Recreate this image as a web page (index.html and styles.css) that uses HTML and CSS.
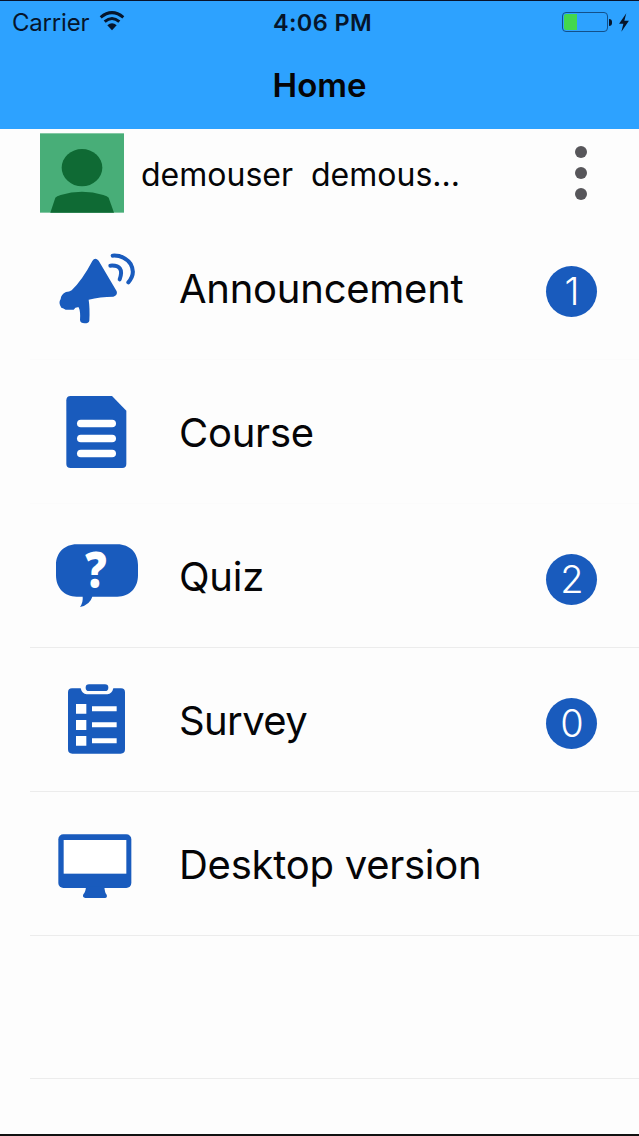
FILE: index.html
```html
<!DOCTYPE html>
<html lang="en">
<head>
    <meta charset="UTF-8">
    <meta name="viewport" content="width=device-width, initial-scale=1.0">
    <title>Home</title>
    <link rel="stylesheet" href="styles.css">
</head>
<body>
    <div class="phone">
        <header class="header">
            <div class="status-bar">
                <div class="status-left">
                    <span class="carrier">Carrier</span>
                    <svg class="wifi" viewBox="0 0 78 60">
                        <path d="M5 19 Q39 -9 73 19" fill="none" stroke="#06152b" stroke-width="9"/>
                        <path d="M17 32 Q39 13 61 32" fill="none" stroke="#06152b" stroke-width="9"/>
                        <path d="M25 43 Q39 31 53 43 L39 58 Z" fill="#06152b"/>
                    </svg>
                </div>
                <span class="time">4:06 PM</span>
                <div class="status-right">
                    <div class="battery"><div class="battery-level"></div></div>
                    <div class="battery-cap"></div>
                    <svg class="bolt" viewBox="0 0 36 58">
                        <path d="M25 1 L3 33 H16 L10 57 L33 24 H19 Z" fill="#06152b"/>
                    </svg>
                </div>
            </div>
            <h1>Home</h1>
        </header>

        <div class="user-row">
            <svg class="avatar" viewBox="0 0 252 238">
                <rect width="252" height="238" fill="#48ae78"/>
                <ellipse cx="126" cy="103" rx="61" ry="56" fill="#0f6a34"/>
                <path d="M31 238 L46 193 Q50 189 62 185 Q126 165 190 185 Q202 189 206 193 L222 238 Z" fill="#0f6a34"/>
            </svg>
            <span class="user-name">demouser&nbsp; demous...</span>
            <div class="more">
                <i></i><i></i><i></i>
            </div>
        </div>

        <ul class="menu">
            <li class="faint">
                <svg class="icon" viewBox="0 -72 390 432">
                    <path d="M187 63 Q195 50 206 62 L260 154 Q264 166 250 170 Q210 170 176 179 Q180 205 178 242 Q176 250 164 250 Q151 250 150 240 Q152 215 146 202 Q137 200 131 209 H107 Q100 204 94 203 Q84 188 92 177 Q93 163 108 156 Q118 156 125 151 Q157 120 187 63 Z"/>
                    <path class="line" d="M241 77 Q285 74 269 118"/>
                    <path class="line" d="M248 47 Q282 45 302 72 Q318 101 295 127"/>
                </svg>
                <span class="label">Announcement</span>
                <span class="badge">1</span>
            </li>
            <li class="faint">
                <svg class="icon" viewBox="0 -60 390 432">
                    <path d="M122 48 H246 L289 92 V252 Q289 264 277 264 H122 Q109 264 109 252 V61 Q109 48 122 48 Z"/>
                    <rect class="white" x="141" y="119" width="117" height="23" rx="11.5"/>
                    <rect class="white" x="141" y="164" width="117" height="23" rx="11.5"/>
                    <rect class="white" x="141" y="209" width="117" height="23" rx="11.5"/>
                </svg>
                <span class="label">Course</span>
            </li>
            <li>
                <svg class="icon" viewBox="0 -78 390 432">
                    <path d="M140 43 H262 C300 43 324 69 324 105 V136 C324 174 299 200 262 200 H187 Q180 224 150 231 Q160 216 158 200 H140 C103 200 78 174 78 136 V105 C78 69 103 43 140 43 Z"/>
                    <text class="question" transform="translate(198 174) scale(0.85 1)">?</text>
                </svg>
                <span class="label">Quiz</span>
                <span class="badge">2</span>
            </li>
            <li>
                <svg class="icon" viewBox="0 -66 390 432">
                    <path d="M126 55 H152 Q156 72 170 73 H232 Q246 72 250 55 H273 Q285 55 285 67 V238 Q285 251 272 251 H127 Q114 251 114 238 V67 Q114 55 126 55 Z"/>
                    <rect x="167" y="43" width="68" height="20" rx="10"/>
                    <path class="white" d="M138 102 h31 v29 h-31 Z M138 150 h31 v30 h-31 Z M138 198 h31 v29 h-31 Z M186 109 h74 v15 h-74 Z M186 157 h74 v15 h-74 Z M186 205 h74 v15 h-74 Z"/>
                </svg>
                <span class="label wide">Survey</span>
                <span class="badge">0</span>
            </li>
            <li>
                <svg class="icon" viewBox="0 -84 390 432">
                    <rect x="85" y="43" width="219" height="161" rx="15"/>
                    <rect class="white" x="101" y="60" width="188" height="101"/>
                    <path d="M168 200 H223 Q224 217 230 224 Q233 233 225 234 H166 Q156 233 160 223 Q167 216 168 200 Z"/>
                </svg>
                <span class="label">Desktop version</span>
            </li>
            <li class="empty"></li>
        </ul>
    </div>
</body>
</html>
```

FILE: styles.css
```css
* {
    box-sizing: border-box;
}
body {
    margin: 0;
    background-color: #fdfdfd;
    font-family: Inter, "Liberation Sans", sans-serif;
    color: #050507;
}
.phone {
    width: 639px;
    height: 1136px;
    overflow: hidden;
    border-top: 1px solid #08132b;
    border-bottom: 2px solid #111;
}
.header {
    height: 128px;
    background-color: #2da2ff;
}
.status-bar {
    height: 42px;
    display: grid;
    grid-template-columns: 1fr auto 1fr;
    align-items: center;
    padding: 0 9px 0 12px;
    font-size: 24px;
    color: #06152b;
}
.status-left, .status-right {
    display: flex;
    align-items: center;
}
.status-right {
    justify-content: flex-end;
}
.carrier {
    letter-spacing: -0.2px;
}
.wifi {
    width: 26px;
    height: 20px;
    margin-left: 10px;
    margin-top: -2px;
}
.time {
    margin-left: 3px;
    font-size: 23.5px;
    font-weight: 600;
    letter-spacing: 0.4px;
}
.battery {
    width: 46px;
    height: 20px;
    padding: 1px;
    border: 1px solid #13508a;
    border-radius: 4px;
}
.battery-level {
    width: 13px;
    height: 100%;
    background-color: #43d74e;
    border-radius: 2px 0 0 2px;
}
.battery-cap {
    width: 3px;
    height: 7px;
    margin-left: 1px;
    background-color: #06152b;
    border-radius: 0 3px 3px 0;
}
.bolt {
    width: 12px;
    height: 19px;
    margin-left: 6px;
}
h1 {
    margin: 22px 0 0;
    text-align: center;
    font-size: 33px;
    line-height: 40px;
    font-weight: 600;
}
.user-row {
    height: 87px;
    display: flex;
    align-items: flex-start;
    padding: 4px 52px 0 40px;
}
.avatar {
    width: 84px;
    height: 80px;
}
.user-name {
    margin-left: 17px;
    font-size: 32px;
    line-height: 83px;
}
.more {
    margin: 13px 0 0 auto;
    display: flex;
    flex-direction: column;
    gap: 9px;
}
.more i {
    width: 12px;
    height: 12px;
    border-radius: 50%;
    background-color: #57565a;
}
.menu {
    list-style: none;
    margin: 0 0 0 30px;
    padding: 0;
}
.menu li {
    height: 144px;
    display: flex;
    align-items: center;
    padding-right: 42px;
    border-bottom: 1px solid #ececec;
}
.menu .faint {
    border-bottom-color: #fbfbfb;
}
.menu .empty {
    height: 143px;
}
.icon {
    width: 130px;
    height: 144px;
    flex: none;
    fill: #195bbd;
}
.icon .white {
    fill: #fff;
}
.icon .line {
    fill: none;
    stroke: #195bbd;
    stroke-width: 12;
    stroke-linecap: round;
}
.question {
    fill: #fff;
    font-family: "Open Sans", sans-serif;
    font-size: 150px;
    font-weight: 800;
    text-anchor: middle;
}
.label {
    margin: 2px 0 0 19px;
    font-size: 40px;
    letter-spacing: -0.25px;
    white-space: nowrap;
}
.label.wide {
    letter-spacing: -0.6px;
}
.badge {
    width: 51px;
    height: 51px;
    margin: 7px 0 0 auto;
    padding-left: 1px;
    border-radius: 50%;
    background-color: #195bbd;
    color: #fff;
    font-size: 38px;
    font-weight: 300;
    line-height: 51px;
    text-align: center;
}
```
